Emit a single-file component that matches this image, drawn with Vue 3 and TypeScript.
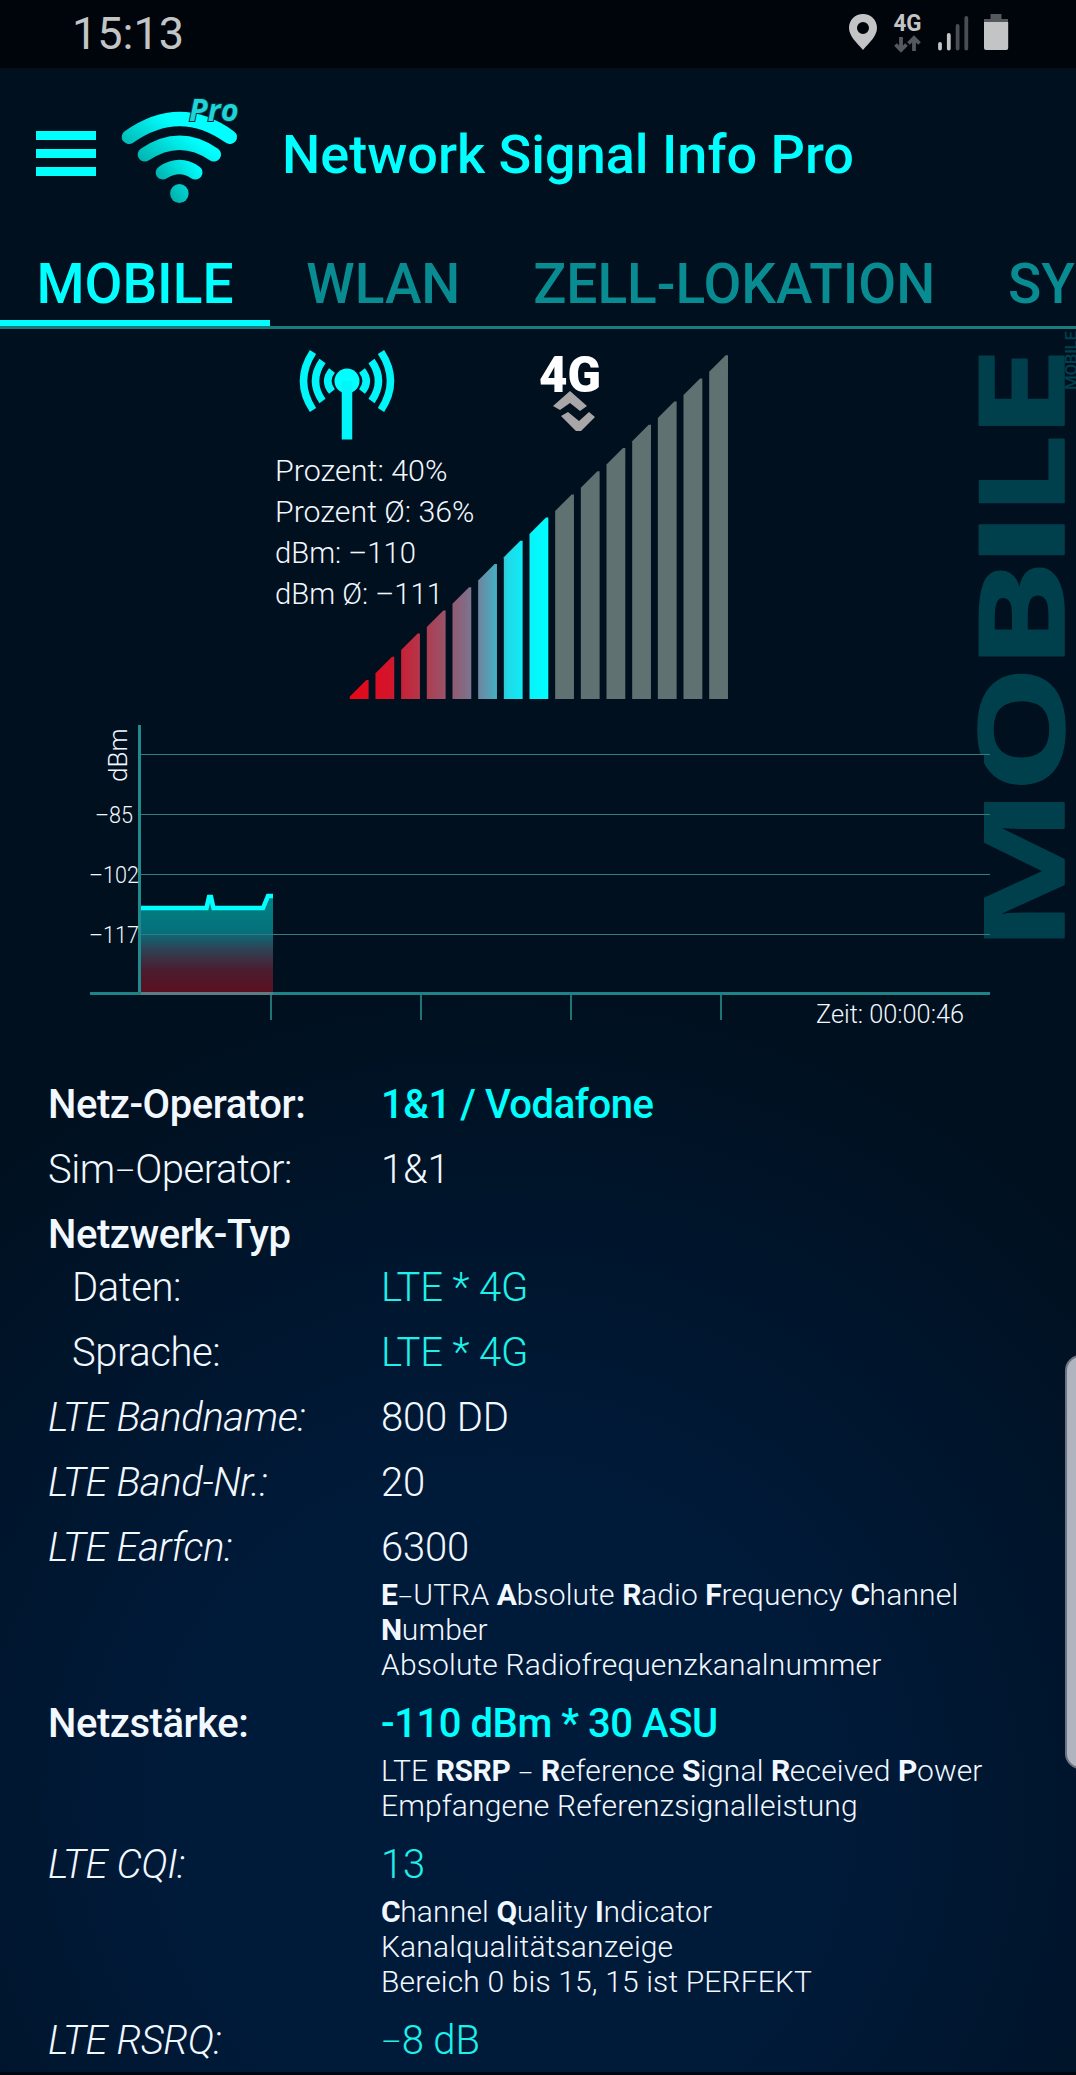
<script setup lang="ts">
interface Part {
  text: string
  strong?: boolean
  dash?: boolean
}
interface Row {
  label: string
  kind?: 'bold' | 'italic' | 'indent'
  value?: string
  accent?: boolean
  notes?: Part[][]
  tight?: boolean
}

// Splits out dashes, which are set a little smaller than the text around them.
const dashes = (line: string): Part[] =>
  line
    .split(/(–)/)
    .filter((t) => t)
    .map((text) => ({ text, dash: text === '–' }))

// "*X*" marks an emphasised fragment of a note line.
const note = (line: string): Part[] =>
  line
    .split('*')
    .flatMap((text, i) => (i % 2 === 1 ? [{ text, strong: true }] : dashes(text)))

const tabs = ['MOBILE', 'WLAN', 'ZELL-LOKATION', 'SYSTEM']

const bars = Array.from({ length: 15 }, (_, i) => {
  const x = 349.8 + i * 25.67
  const right = 351 - i * 23.2
  const left = Math.min(right + 16.5, 369.5)
  return {
    active: i < 8,
    points: `${x},370 ${x},${left} ${x + 16.5},${right} ${x + 18.8},${right} ${x + 18.8},370`,
  }
})

const watermark = [
  { ch: 'M', y: 608.5, scale: 1.48, bearing: 10.7 },
  { ch: 'O', y: 455, scale: 1.35, bearing: 6.9 },
  { ch: 'B', y: 326.5, scale: 1.38, bearing: 10.7 },
  { ch: 'I', y: 225, scale: 1.59, bearing: 10.7 },
  { ch: 'L', y: 173.5, scale: 1.2, bearing: 10.7 },
  { ch: 'E', y: 96, scale: 1.4, bearing: 10.7 },
]

const stats = [
  { text: 'Prozent: 40%', width: 172.5 },
  { text: 'Prozent Ø: 36%', width: 199.5 },
  { text: 'dBm: –110', width: 141 },
  { text: 'dBm Ø: –111', width: 168 },
]

const scale = [
  { text: '–85', x: 95, y: 494, width: 38 },
  { text: '–102', x: 89, y: 554, width: 50 },
  { text: '–117', x: 89, y: 614, width: 50 },
]

const rows: Row[] = [
  { label: 'Netz-Operator:', kind: 'bold', value: '1&1 / Vodafone', accent: true },
  { label: 'Sim–Operator:', value: '1&1' },
  { label: 'Netzwerk-Typ', kind: 'bold', tight: true },
  { label: 'Daten:', kind: 'indent', value: 'LTE * 4G', accent: true },
  { label: 'Sprache:', kind: 'indent', value: 'LTE * 4G', accent: true },
  { label: 'LTE Bandname:', kind: 'italic', value: '800 DD' },
  { label: 'LTE Band-Nr.:', kind: 'italic', value: '20' },
  {
    label: 'LTE Earfcn:',
    kind: 'italic',
    value: '6300',
    notes: [
      note('*E*–UTRA *A*bsolute *R*adio *F*requency *C*hannel'),
      note('*N*umber'),
      note('Absolute Radiofrequenzkanalnummer'),
    ],
  },
  {
    label: 'Netzstärke:',
    kind: 'bold',
    value: '-110 dBm * 30 ASU',
    accent: true,
    notes: [
      note('LTE *RSRP* – *R*eference *S*ignal *R*eceived *P*ower'),
      note('Empfangene Referenzsignalleistung'),
    ],
  },
  {
    label: 'LTE CQI:',
    kind: 'italic',
    value: '13',
    accent: true,
    notes: [
      note('*C*hannel *Q*uality *I*ndicator'),
      note('Kanalqualitätsanzeige'),
      note('Bereich 0 bis 15, 15 ist PERFEKT'),
    ],
  },
  { label: 'LTE RSRQ:', kind: 'italic', value: '–8 dB', accent: true },
]
</script>

<template>
  <div class="screen">
    <div class="status">
      <span class="clock">15:13</span>
      <svg class="status-icons" width="160" height="68" viewBox="846 0 160 68">
        <path
          fill="#c3c4c6"
          fill-rule="evenodd"
          d="M863 14C855 14 849 20 849 28C849 36 857 43 863 50C869 43 877 36 877 28C877 20 871 14 863 14ZM863 22a6 6 0 1 1 0 12a6 6 0 1 1 0-12Z"
        />
        <text x="893.5" y="31" class="net" textLength="28" lengthAdjust="spacingAndGlyphs">4G</text>
        <g fill="none" stroke="#55585d" stroke-width="3.8">
          <path d="M901 37v13M895.500 44.500l5.500 5.500l5.500-5.500" />
          <path d="M914 51V38M908.500 43.500l5.500-5.500l5.500 5.500" />
        </g>
        <g stroke-width="3.8" stroke-linecap="round">
          <path stroke="#c3c4c6" d="M940 44v4.500M948.800 35v13.500" />
          <path stroke="#4a4d52" d="M957.600 26v22.500M966.300 18v30.500" />
        </g>
        <path fill="#55585d" d="M990.500 14h11v5h6.500v4h-24v-4h6.500z" />
        <path fill="#c3c4c6" d="M984 22h24.200v26q0 2-2 2h-20.200q-2 0-2-2z" />
      </svg>
    </div>

    <header class="header">
      <div class="menu"><i /><i /><i /></div>
      <svg class="logo" width="134" height="120" viewBox="115.300 90 134 120">
        <defs>
          <linearGradient id="wifi" gradientUnits="userSpaceOnUse" x1="130" y1="180" x2="172" y2="125">
            <stop offset="0" stop-color="#00968f" />
            <stop offset="1" stop-color="#00ffff" />
          </linearGradient>
          <linearGradient id="wifi2" gradientUnits="userSpaceOnUse" x1="155" y1="190" x2="190" y2="165">
            <stop offset="0" stop-color="#00a8a2" />
            <stop offset="1" stop-color="#00fafa" />
          </linearGradient>
        </defs>
        <g transform="scale(1.0295 1)">
          <g fill="none" stroke="url(#wifi)" stroke-width="14" stroke-linecap="round">
            <path d="M125.500 137Q175 101 223.500 137" />
            <path d="M141 154.500Q175 131 208 154.500" />
            <path d="M158.500 172.500Q175 161.500 190 172.500" stroke="url(#wifi2)" />
          </g>
          <ellipse cx="174.500" cy="193.500" rx="9" ry="9.500" fill="url(#wifi2)" />
          <text x="184" y="121.500" class="pro" textLength="48" lengthAdjust="spacingAndGlyphs">Pro</text>
        </g>
      </svg>
      <h1>Network Signal Info Pro</h1>
    </header>

    <nav class="tabs">
      <span v-for="(tab, i) in tabs" :key="tab" class="tab" :class="{ active: i === 0 }">{{ tab }}</span>
    </nav>

    <svg class="panel" width="1076" height="721" viewBox="0 0 1076 721">
      <defs>
        <linearGradient id="level" gradientUnits="userSpaceOnUse" x1="350" y1="0" x2="548" y2="0">
          <stop offset="0" stop-color="#e40818" />
          <stop offset="0.2" stop-color="#d4142a" />
          <stop offset="0.4" stop-color="#aa4054" />
          <stop offset="0.58" stop-color="#846a84" />
          <stop offset="0.66" stop-color="#688ba4" />
          <stop offset="0.75" stop-color="#42b4c6" />
          <stop offset="0.8" stop-color="#20dae8" />
          <stop offset="0.9" stop-color="#08f2fa" />
          <stop offset="1" stop-color="#00ffff" />
        </linearGradient>
        <linearGradient id="area" gradientUnits="userSpaceOnUse" x1="0" y1="570" x2="0" y2="664">
          <stop offset="0" stop-color="#008183" />
          <stop offset="0.35" stop-color="#06707c" />
          <stop offset="0.52" stop-color="#2c4558" />
          <stop offset="0.75" stop-color="#4b1d30" />
          <stop offset="1" stop-color="#5a1020" />
        </linearGradient>
      </defs>

      <g class="watermark">
        <g v-for="l in watermark" :key="l.ch" :transform="`translate(1063.5 ${l.y}) rotate(-90) scale(${l.scale} 1)`">
          <text :x="-l.bearing" y="0">{{ l.ch }}</text>
        </g>
      </g>
      <text class="tiny" transform="translate(1077 61) rotate(-90)" textLength="59">MOBILE</text>
      <rect x="960" y="425.500" width="24" height="200" fill="#00101f" />

      <!-- antenna -->
      <g stroke="#00f6f8" fill="none" stroke-width="7.500">
        <circle cx="347" cy="52" r="12.500" fill="#00ffff" stroke="none" />
        <path d="M347 52v58.500" stroke-width="10.500" />
        <path d="M313 23Q294 52 313 81M322.500 32Q308.500 52 322.500 72M332 41.500Q323.500 52 332 62.500" stroke-width="7.500" />
        <path d="M381 23Q400 52 381 81M371.500 32Q385.500 52 371.500 72M362 41.500Q370.500 52 362 62.500" stroke-width="7.500" />
      </g>

      <text x="539" y="63" class="gen" textLength="62" lengthAdjust="spacingAndGlyphs">4G</text>
      <path d="M553 77L570 62L587 77L580 82L570 74L560 81Z" fill="#a8a6a6" />
      <path d="M561 87L568 83L579 92L589 83L595 88L581 102H576Z" fill="#a8a6a6" />

      <polygon v-for="(b, i) in bars" :key="i" :points="b.points" :fill="b.active ? 'url(#level)' : '#5f7171'" />

      <text
        v-for="(s, i) in stats"
        :key="s.text"
        x="275"
        :y="152 + i * 41"
        class="stat"
        :textLength="s.width"
        lengthAdjust="spacingAndGlyphs"
      >{{ s.text }}</text>

      <!-- history chart -->
      <path d="M141 664V580H206L210 568L213 580H264L268 567H273V664Z" fill="url(#area)" />
      <g stroke="#347c80" stroke-width="1.200">
        <path d="M141 425.500H990M141 485.500H990M141 545.500H990M141 605.500H990" />
      </g>
      <g stroke="#1f7478" stroke-width="2">
        <path d="M271 666v25M421 666v25M571 666v25M721 666v25" />
      </g>
      <path d="M139.500 396V663" stroke="#208a8c" stroke-width="3" />
      <path d="M90 664.500H990" stroke="#1f8286" stroke-width="3" />
      <path d="M141 664.500H273" stroke="#5d7c84" stroke-width="3" />
      <path d="M141 579H206.500L209 568H211L213.500 579H263L268 567H273" stroke="#00ffff" stroke-width="4.500" fill="none" />
      <text class="axis unit" transform="translate(127 453) rotate(-90)">dBm</text>
      <text
        v-for="s in scale"
        :key="s.text"
        class="axis"
        :x="s.x"
        :y="s.y"
        :textLength="s.width"
        lengthAdjust="spacingAndGlyphs"
      >{{ s.text }}</text>
      <text class="axis unit" x="816" y="694" textLength="148" lengthAdjust="spacingAndGlyphs">Zeit: 00:00:46</text>
    </svg>

    <main class="list">
      <div v-for="row in rows" :key="row.label" class="row" :class="[row.kind, { tight: row.tight, noted: row.notes }]">
        <div class="label"><span v-for="(p, j) in dashes(row.label)" :key="j" :class="{ dash: p.dash }">{{ p.text }}</span></div>
        <div class="cell">
          <div class="value" :class="{ accent: row.accent }"><span v-for="(p, j) in dashes(row.value ?? '')" :key="j" :class="{ dash: p.dash }">{{ p.text }}</span></div>
          <div v-if="row.notes" class="notes">
            <p v-for="(line, i) in row.notes" :key="i"><span v-for="(p, j) in line" :key="j" :class="{ dash: p.dash, strong: p.strong }">{{ p.text }}</span></p>
          </div>
        </div>
      </div>
    </main>
    <div class="thumb" />
  </div>
</template>

<style>
body {
  background: #00101f;
}
</style>

<style scoped>
.screen {
  position: relative;
  width: 1076px;
  height: 2075px;
  overflow: hidden;
  box-sizing: border-box;
  border-bottom: 3px solid #000710;
  font-family: Roboto, sans-serif;
  color: #f2f8ff;
  background: radial-gradient(ellipse 820px 820px at 500px 1810px, #001a3b 0%, #001a39 40%, #00152c 72%, #00101f 100%) #00101f;
}
.status {
  display: flex;
  justify-content: space-between;
  height: 68px;
  box-sizing: border-box;
  padding: 0 70px 0 72px;
  background: #00050b;
}
.clock {
  font-size: 45px;
  line-height: 67px;
  color: #c3c4c6;
}
.status-icons {
  overflow: visible;
}
.net {
  font: 700 23px Roboto, sans-serif;
  fill: #c3c4c6;
}
.header {
  display: flex;
  align-items: center;
  height: 172px;
  padding-left: 36px;
}
.menu {
  display: flex;
  flex-direction: column;
  flex: none;
  gap: 9px;
  width: 60px;
  margin-bottom: 2px;
}
.menu i {
  height: 9px;
  background: #00ffff;
}
.logo {
  flex: none;
  margin: -8px 0 0 19px;
  overflow: visible;
}
.pro {
  font: italic 700 31px "Open Sans", sans-serif;
  fill: #1fd4d6;
  stroke: #00303c;
  stroke-width: 2px;
  paint-order: stroke;
}
h1 {
  margin: 2px 0 0 33px;
  font-size: 54px;
  font-weight: 500;
  line-height: 64px;
  color: #00ffff;
  white-space: nowrap;
}
.tabs {
  display: flex;
  height: 89px;
  box-sizing: border-box;
  border-bottom: 3px solid #1b7a7c;
}
.tab {
  flex: none;
  box-sizing: border-box;
  padding: 12px 36.4px 0;
  font-size: 55px;
  font-weight: 500;
  line-height: 64px;
  color: #088b91;
}
.tab.active {
  color: #00ffff;
  border-bottom: 6px solid #00ffff;
}
.panel {
  display: block;
}
.watermark text {
  font: 700 119px "Open Sans", sans-serif;
  stroke: #00404c;
  stroke-width: 1.5px;
  stroke-linejoin: round;
}
.watermark {
  fill: #00404c;
}
.tiny {
  font: 500 17px Roboto, sans-serif;
  fill: #00404c;
}
.gen {
  font: 900 50px Roboto, sans-serif;
  fill: #fff;
}
.stat {
  font-size: 30px;
  font-weight: 300;
  fill: #f2f8ff;
}
.axis {
  font-size: 24.5px;
  font-weight: 300;
  fill: #f2f8ff;
}
.unit {
  font-size: 26px;
}
.list {
  padding: 31px 0 0 48px;
}
.row {
  display: flex;
  margin-bottom: 18px;
  font-size: 40px;
  font-weight: 300;
  line-height: 47px;
}
.row.tight {
  margin-bottom: 6px;
}
.row.noted {
  margin-bottom: 19px;
}
.label {
  flex: none;
  width: 333px;
  letter-spacing: -0.45px;
  white-space: nowrap;
}
.bold .label,
.bold .value {
  font-weight: 500;
}
.bold .value {
  letter-spacing: -0.45px;
}
.italic .label {
  font-style: italic;
  letter-spacing: -0.38px;
}
.indent .label {
  box-sizing: border-box;
  padding-left: 24px;
}
.value {
  min-height: 47px;
  letter-spacing: -0.15px;
  white-space: nowrap;
}
.accent {
  color: #1ff0ea;
}
.bold .accent {
  color: #00ffff;
}
.dash {
  display: inline-block;
  font-size: 0.8em;
  line-height: 1;
  position: relative;
  top: -0.02em;
}
.notes {
  margin-top: 5px;
  padding-top: 1px;
  margin-bottom: -1px;
  font-size: 30px;
  line-height: 35px;
  letter-spacing: 0.15px;
}
.notes p {
  margin: 0;
  white-space: pre;
}
.strong {
  font-weight: 700;
  letter-spacing: -0.4px;
}
.thumb {
  position: absolute;
  top: 1355px;
  right: -20px;
  width: 31px;
  height: 414px;
  box-sizing: border-box;
  border: 2px solid #6d7483;
  border-radius: 18px;
  background: #b0b4bf;
}
</style>
